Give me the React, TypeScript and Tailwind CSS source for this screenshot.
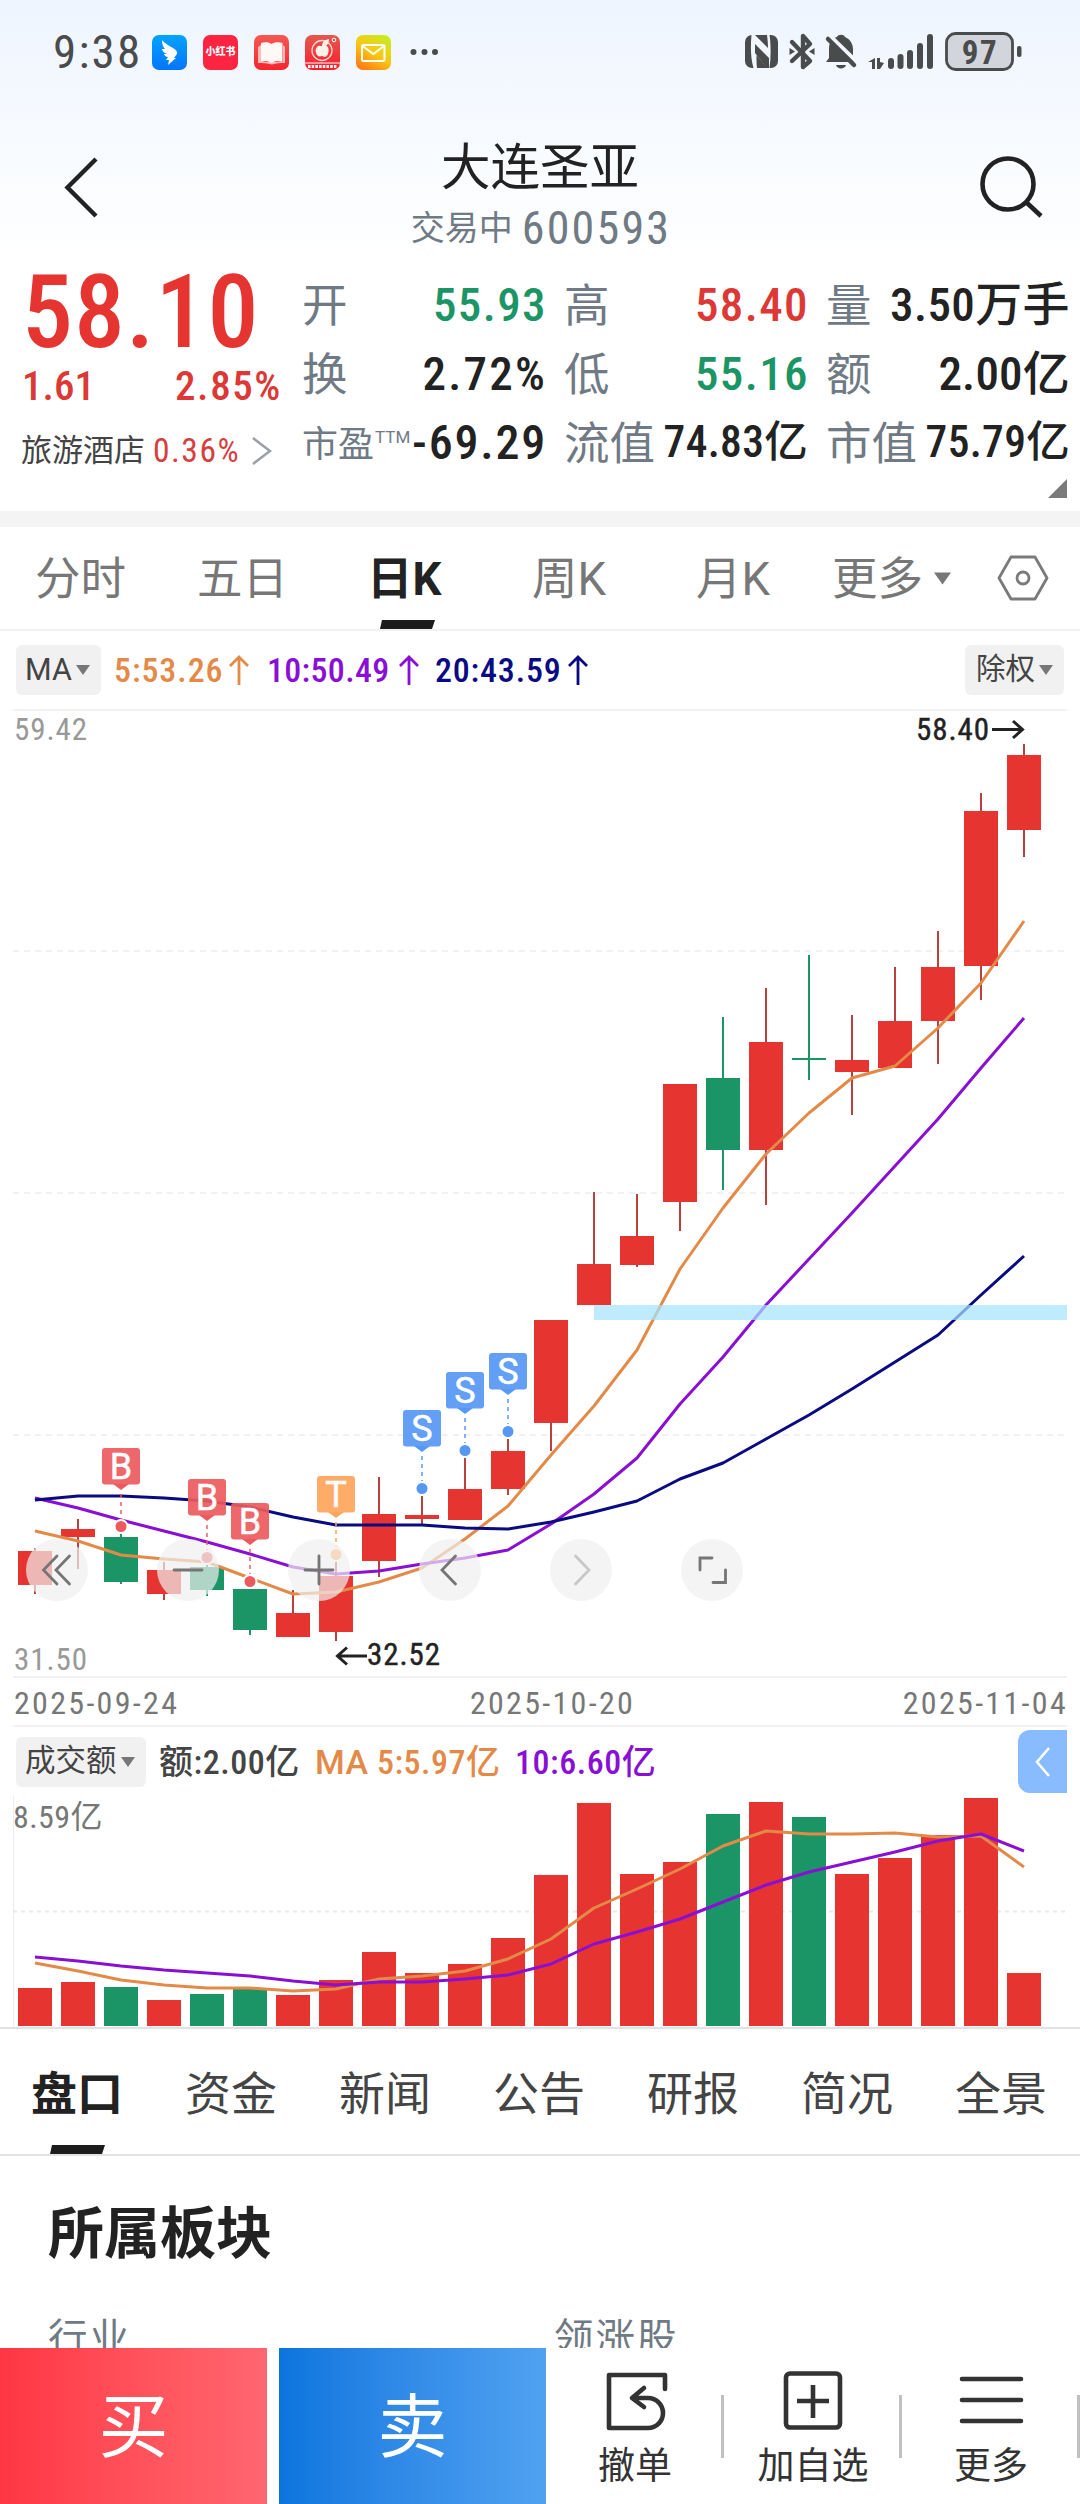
import React from "react";

type Candle = {
  top: number;
  bottom: number;
  high: number;
  low: number;
  up: boolean;
};

type Marker = { index: number; y: number; label: string; color: string };

const RED = "#e63431";
const GREEN = "#1b9565";
const ORANGE = "#e48a48";
const PURPLE = "#8a0fd4";
const NAVY = "#0a0a82";

// Chart columns are 43px apart, the first one is centred on x = 35
const colX = (i: number) => 35 + i * 43;

const c = (top: number, bottom: number, high: number, low: number, up = true): Candle => ({
  top,
  bottom,
  high,
  low,
  up,
});

const candles: Candle[] = [
  c(1551, 1585, 1548, 1594),
  c(1529, 1537, 1519, 1569),
  c(1537, 1582, 1533, 1584, false),
  c(1570, 1594, 1562, 1600),
  c(1567, 1590, 1564, 1596, false),
  c(1589, 1630, 1589, 1635, false),
  c(1613, 1637, 1590, 1637),
  c(1576, 1632, 1561, 1641),
  c(1514, 1561, 1477, 1577),
  c(1515, 1519, 1496, 1526),
  c(1489, 1520, 1458, 1520),
  c(1451, 1489, 1439, 1495),
  c(1320, 1423, 1320, 1451),
  c(1264, 1305, 1192, 1305),
  c(1236, 1265, 1194, 1267),
  c(1084, 1202, 1084, 1231),
  c(1078, 1150, 1017, 1190, false),
  c(1042, 1150, 988, 1205),
  c(1058, 1060, 955, 1080, false),
  c(1060, 1072, 1015, 1115),
  c(1021, 1068, 967, 1068),
  c(967, 1021, 931, 1064),
  c(811, 966, 793, 1000),
  c(755, 830, 744, 857),
];

const ma5 = [1531, 1541, 1555, 1559, 1562, 1578, 1594, 1592, 1582, 1568, 1539, 1506, 1455, 1406, 1350, 1269, 1208, 1154, 1113, 1078, 1066, 1028, 983, 921];
const ma10 = [1498, 1508, 1520, 1531, 1542, 1554, 1567, 1574, 1571, 1564, 1558, 1550, 1524, 1494, 1458, 1404, 1357, 1305, 1259, 1213, 1166, 1119, 1068, 1018];
const ma20 = [1500, 1496, 1496, 1498, 1501, 1507, 1517, 1525, 1525, 1525, 1528, 1529, 1522, 1512, 1501, 1479, 1463, 1439, 1415, 1389, 1362, 1335, 1295, 1256];

const volumeTops = [1988, 1982, 1987, 2000, 1994, 1989, 1995, 1980, 1952, 1973, 1964, 1938, 1875, 1803, 1874, 1862, 1814, 1802, 1817, 1874, 1858, 1835, 1798, 1973];
const volMa5 = [1963, 1971, 1980, 1985, 1988, 1988, 1991, 1989, 1979, 1976, 1971, 1959, 1939, 1908, 1889, 1869, 1846, 1831, 1834, 1834, 1833, 1837, 1836, 1867];
const volMa10 = [1957, 1961, 1966, 1970, 1973, 1976, 1981, 1985, 1982, 1982, 1979, 1975, 1964, 1944, 1932, 1919, 1902, 1885, 1872, 1862, 1852, 1841, 1834, 1851];

const markers: Marker[] = [
  { index: 2, y: 1448, label: "B", color: "#ed5a5d" },
  { index: 4, y: 1479, label: "B", color: "#ed5a5d" },
  { index: 5, y: 1503, label: "B", color: "#ed5a5d" },
  { index: 7, y: 1476, label: "T", color: "#ffa55c" },
  { index: 9, y: 1410, label: "S", color: "#5698f4" },
  { index: 10, y: 1372, label: "S", color: "#5698f4" },
  { index: 11, y: 1353, label: "S", color: "#5698f4" },
];

const toPoints = (ys: number[]) => ys.map((y, i) => `${colX(i)},${y}`).join(" ");

const Line: React.FC<{ ys: number[]; color: string }> = ({ ys, color }) => (
  <polyline points={toPoints(ys)} fill="none" stroke={color} strokeWidth="3" strokeLinejoin="round" />
);

const Caret: React.FC<{ className?: string }> = ({ className = "" }) => (
  <svg className={`shrink-0 ${className}`} viewBox="0 0 14 10" fill="#777">
    <path d="M0 0h14L7 10z" />
  </svg>
);

const UpArrow: React.FC = () => (
  <svg className="ml-auto h-[30px] w-5" viewBox="0 0 20 30" fill="none" stroke="currentColor" strokeWidth="2.8">
    <path d="M10 30V2M1 11l9-9 9 9" />
  </svg>
);

const StatusBar: React.FC = () => (
  <div className="flex h-[106px] items-center pl-[53px] text-[#4a4b4d]">
    <span className="-mt-[4px] w-[99px] text-[47px] leading-none tracking-[2.2px]">9:38</span>
    <div className="flex -translate-y-px gap-4">
      <svg className="size-[35px]" viewBox="0 0 35 35">
        <defs>
          <linearGradient id="wing" x1="0" y1="0" x2="0" y2="1">
            <stop offset="0" stopColor="#02a3ff" />
            <stop offset="1" stopColor="#0575fb" />
          </linearGradient>
        </defs>
        <rect width="35" height="35" rx="7" fill="url(#wing)" />
        <path d="M10 5c2 3 6 5 11 8 3 2 5 4 4 6l-3 4h2l-8 7 1-5h-3l2-3c-2 0-4-2-4-3l3 0c-3-1-5-3-5-5h3c-2-2-3-5-3-9z" fill="#fff" />
      </svg>
      <div className="flex size-[35px] items-center justify-center whitespace-nowrap rounded-[7px] bg-[#fd2442] text-[10px] font-black leading-none text-white">
        小红书
      </div>
      <svg className="size-[35px]" viewBox="0 0 35 35">
        <defs>
          <linearGradient id="book" x1="0" y1="0" x2="0" y2="1">
            <stop offset="0" stopColor="#f65852" />
            <stop offset="1" stopColor="#f6262d" />
          </linearGradient>
        </defs>
        <rect width="35" height="35" rx="7" fill="url(#book)" />
        <path d="M4 12l3-2v17h22V10l2 2v16c-5 0-9 0-13 1.500-5-1.500-9-1.500-14-1.500z" fill="#fbb" />
        <path d="M7 8c4-1 8-1 10.500 1 3-2 7-2 11-1v19c-4-1-8-1-11 1-3-2-7-2-10.500-1z" fill="#fff8f4" />
      </svg>
      <svg className="size-[35px]" viewBox="0 0 35 35">
        <defs>
          <linearGradient id="apple" x1="0" y1="0" x2="0" y2="1">
            <stop offset="0" stopColor="#e25a50" />
            <stop offset="1" stopColor="#fb1c2c" />
          </linearGradient>
        </defs>
        <rect width="35" height="35" rx="7" fill="url(#apple)" />
        <circle cx="17" cy="15.500" r="10" fill="none" stroke="#fbd6d0" strokeWidth="1.300" />
        <path d="M12 12c2-2 3-1 5-1 0-3 2-6 7-7 0 3-1 5-3 7 3 0 3 5 2 8-2 4-4 3-6 2-3 1-5 0-6-3-1-3 0-5 1-6z" fill="#fdf1ea" />
        <circle cx="29" cy="5" r="1.800" fill="none" stroke="#fff" strokeWidth="1" />
        <path d="M0 28h35" stroke="#fff" strokeWidth="1" />
        <path d="M3 31.500h29" stroke="#fff" strokeWidth="3" strokeDasharray="2.500 1.200" />
      </svg>
      <svg className="size-[35px]" viewBox="0 0 35 35" fill="none">
        <defs>
          <linearGradient id="mail" x1="0.200" y1="1" x2="0.800" y2="0">
            <stop offset="0" stopColor="#fd7a16" />
            <stop offset="0.500" stopColor="#f9c813" />
            <stop offset="1" stopColor="#c6ec20" />
          </linearGradient>
        </defs>
        <rect width="35" height="35" rx="7" fill="url(#mail)" />
        <rect x="6" y="10" width="22.500" height="16" rx="1.500" stroke="#fff" strokeWidth="2" />
        <path d="M6.500 11l10.800 8L28 11" stroke="#fff" strokeWidth="2" />
      </svg>
    </div>
    <svg className="ml-[19px] h-[8px] w-[30px] -translate-y-px" viewBox="0 0 30 8" fill="#4a4b4d">
      <circle cx="3.500" cy="4" r="3" />
      <circle cx="14.500" cy="4" r="3" />
      <circle cx="25" cy="4" r="3" />
    </svg>
    <svg className="ml-auto h-[40px] w-[335px] -translate-y-px" viewBox="745 32 335 40" fill="#4a4b4d">
      {/* NFC */}
      <rect x="745" y="35" width="33" height="33" rx="7" />
      <path
        d="M751.500 35h3.500l13 13c0-5-.5-9-1-13h2.500c1.500 10 1.500 22 0 33h-2l-11-13c0 5 0 9 .5 13h-3.500c-3-10-3-22-2-33z"
        fill="#f2f6fd"
      />
      <path d="M755 44l14 14v10h-2L755 53z" />
      {/* Bluetooth */}
      <path
        d="M792 61l18-17-7-8v31l7-6-18-19"
        fill="none"
        stroke="#4a4b4d"
        strokeWidth="4.400"
        strokeLinejoin="round"
        strokeLinecap="round"
      />
      <path d="M789.500 48l5.500 3.500-5.500 3.500zM814.500 48l-5.500 3.500 5.500 3.500z" />
      {/* Muted bell */}
      <path d="M829 58V49c0-8 4-11 8-12 1-3 7-3 8 0 5 2 8 7 8 12v7l3 6h-30z" />
      <path d="M826 32l32 31" stroke="#f2f6fd" strokeWidth="4" />
      <path d="M828 39l26 26" stroke="#4a4b4d" strokeWidth="4.500" strokeLinecap="round" />
      <path d="M836 65h10c-1 4.500-9 4.500-10 0z" />
      {/* Signal */}
      <path d="M875 58v11h-3v-7h-4zM877 58h3v4l4 1-4 6h-3z" />
      <rect x="888" y="58" width="6" height="11" rx="3" />
      <rect x="897.500" y="54" width="6" height="15" rx="3" />
      <rect x="907" y="50" width="6" height="19" rx="3" />
      <rect x="917" y="43" width="6" height="26" rx="3" />
      <rect x="927" y="34" width="6" height="35" rx="3" />
      {/* Battery */}
      <rect x="946.500" y="33.500" width="66" height="36" rx="9" fill="#d2d5db" stroke="#4a4b4d" strokeWidth="2.800" />
      <rect x="1017" y="46" width="4.500" height="11" rx="2" />
      <text x="980" y="63.500" fontSize="33" fontWeight="700" textAnchor="middle" letterSpacing="1.500">
        97
      </text>
    </svg>
  </div>
);

const Header: React.FC = () => (
  <header className="flex h-[150px] items-start justify-between pl-[60px] pr-[34px]">
    <svg className="mt-[50px] h-[62px] w-[40px]" viewBox="0 0 40 62" fill="none" stroke="#222" strokeWidth="4.400">
      <path d="M36 3L7.500 31.500 36 60" />
    </svg>
    <div className="flex flex-col items-center pt-[32px]">
      <h1 className="text-[49.500px] leading-[60px] text-[#222]">大连圣亚</h1>
      <p className="flex items-center leading-[60px] text-[#6f7a84]">
        <span className="mr-[9px] text-[34px]">交易中</span>
        <span className="-mr-[2px] text-[46px] tracking-[2.2px]">600593</span>
      </p>
    </div>
    <svg className="mt-[47px] h-[66px] w-[66px]" viewBox="0 0 66 66" fill="none" stroke="#222" strokeWidth="4.600">
      <circle cx="28" cy="31" r="25.500" />
      <path d="M46 49l15 14" />
    </svg>
  </header>
);

type StatProps = {
  label: React.ReactNode;
  value: string;
  color?: string;
  size?: string;
};

const Stat: React.FC<StatProps> = ({
  label,
  value,
  color = "text-[#222]",
  size = "text-[47px] tracking-[1.4px] -mr-px",
}) => (
  <div className="flex items-center justify-between">
    <span className="whitespace-nowrap pt-1 text-[45.500px] leading-none text-[#6f7a84]">{label}</span>
    <span className={`whitespace-nowrap font-medium leading-none ${size} ${color}`}>{value}</span>
  </div>
);

const Quote: React.FC = () => (
  <section className="relative flex h-[255px] pl-[22px] pr-[8px]">
    <div className="w-[280px]">
      <div className="pt-[7px] text-[102px] font-medium leading-[98px] tracking-[1px] text-[#e63431]">58.10</div>
      <div className="flex w-[260px] justify-between text-[41px] font-medium leading-[51px] text-[#dc3836]">
        <span>1.61</span>
        <span className="tracking-[1.6px]">2.85%</span>
      </div>
      <div className="mt-[16px] flex items-center whitespace-nowrap leading-[46px]">
        <span className="-ml-px text-[31px] text-[#444]">旅游酒店</span>
        <span className="ml-[8px] text-[33.500px] tracking-[1.5px] text-[#d5403e]">0.36%</span>
        <svg className="ml-[12px] h-[28px] w-[20px]" viewBox="0 0 20 28" fill="none" stroke="#98a1a9" strokeWidth="2.600">
          <path d="M1 1l17 13L1 27" />
        </svg>
      </div>
    </div>
    <div className="grid h-[221px] flex-1 grid-cols-[244px_244px_244px] grid-rows-3 gap-x-[18px] pt-[14px]">
      <Stat label="开" value="55.93" color="text-[#1b9565]" />
      <Stat label="高" value="58.40" color="text-[#dc3836]" />
      <Stat label="量" value="3.50万手" size="text-[47px] tracking-[0.4px]" />
      <Stat label="换" value="2.72%" size="text-[47px] tracking-[2.2px] -mr-px" />
      <Stat label="低" value="55.16" color="text-[#1b9565]" />
      <Stat label="额" value="2.00亿" size="text-[47px] tracking-[0.2px]" />
      <Stat
        label={
          <span className="flex items-start text-[36px] leading-none">
            市盈<span className="ml-px text-[17px] leading-5 [font-stretch:100%]">TTM</span>
          </span>
        }
        value="-69.29"
        size="text-[48px] tracking-[1.8px] -mr-px"
      />
      <Stat label="流值" value="74.83亿" size="text-[43.500px] tracking-[0.3px]" />
      <Stat label="市值" value="75.79亿" size="text-[43.500px] tracking-[0.3px]" />
    </div>
    <svg className="absolute bottom-[13px] right-[13px] size-[19px]" viewBox="0 0 19 19" fill="#7a7a7a">
      <path d="M19 0v19H0z" />
    </svg>
  </section>
);

const Underline: React.FC<{ className: string }> = ({ className }) => (
  <svg className={`absolute bottom-0 h-[9px] w-[55px] ${className}`} viewBox="0 0 55 9" fill="#1c1c1c">
    <path d="M2 0h53l-3 9H0z" />
  </svg>
);

const PeriodTabs: React.FC = () => (
  <nav className="flex h-[104px] items-center border-b-2 border-[#f1f1f1] text-[45.500px] leading-none text-[#777] [font-stretch:100%]">
    <span className="w-[162px] pl-[35px] pt-1">分时</span>
    <span className="w-[163px] pl-[35px] pt-1">五日</span>
    <span className="relative flex h-full w-[165px] items-center pl-[42px] pt-1 font-bold text-[#222]">
      日K
      <Underline className="left-[55px]" />
    </span>
    <span className="w-[165px] pl-[42px] pt-1">周K</span>
    <span className="w-[165px] pl-[41px] pt-1">月K</span>
    <span className="flex items-center pl-[12px] pt-1">
      更多
      <Caret className="mb-1 ml-[11px] h-[13px] w-[17px]" />
    </span>
    <svg className="ml-[46px] h-[46px] w-[52px]" viewBox="0 0 52 46" fill="none" stroke="#7a7a7a" strokeWidth="2.800">
      <path d="M14 2h24l12 21-12 21H14L2 23z" strokeLinejoin="round" />
      <circle cx="26" cy="23" r="6" />
    </svg>
  </nav>
);

const MaLegend: React.FC = () => (
  <div className="mx-[13px] flex h-[80px] items-center border-b-2 border-[#f1f1f1] pl-[3px] pr-[3px] text-[34px] font-medium leading-none">
    <button className="flex h-[50px] w-[85px] items-center rounded-md bg-[#f1f1f1] pl-[9px] text-[30.500px] font-normal text-[#444]">
      <span className="[font-stretch:100%]">MA</span>
      <Caret className="ml-1 h-[10px] w-[14px]" />
    </button>
    <span className="flex w-[148px] items-center pl-[13px] tracking-[0.9px] text-[#e48a48]">
      5:53.26
      <UpArrow />
    </span>
    <span className="flex w-[170px] items-center pl-[18px] tracking-[0.3px] text-[#8a0fd4]">
      10:50.49
      <UpArrow />
    </span>
    <span className="flex w-[169px] items-center pl-[16px] tracking-[0.8px] text-[#0a0a82]">
      20:43.59
      <UpArrow />
    </span>
    <button className="ml-auto flex h-[50px] w-[99px] items-center rounded-md bg-[#f1f1f1] pl-[11px] text-[29.500px] font-normal text-[#444]">
      除权
      <Caret className="ml-1 h-[10px] w-[14px]" />
    </button>
  </div>
);

const MarkerFlag: React.FC<{ marker: Marker }> = ({ marker }) => {
  const x = colX(marker.index);
  const { y, label, color } = marker;
  return (
    <g>
      <path d={`M${x} ${y + 46}V${y + 72}`} stroke={color} strokeWidth="1.800" strokeDasharray="4 4" opacity="0.800" />
      <circle cx={x} cy={y + 78.5} r="6.500" fill={color} stroke="#fff" strokeWidth="2" />
      <rect x={x - 19} y={y} width="38" height="36.500" rx="3" fill={color} opacity="0.920" />
      <path d={`M${x - 8} ${y + 36}h16l-8 6z`} fill={color} />
      <text
        className="[font-stretch:100%]"
        x={x}
        y={y + 31}
        fontSize="36"
        fontWeight="400"
        fill="#fff"
        stroke="#fff"
        strokeWidth="0.500"
        textAnchor="middle"
      >
        {label}
      </text>
    </g>
  );
};

const Control: React.FC<{ d: string; faded?: boolean }> = ({ d, faded = false }) => (
  <button className="size-[62px] rounded-full bg-[#f0f0f0]/70">
    <svg
      className="size-[62px]"
      viewBox="0 0 62 62"
      fill="none"
      stroke={faded ? "#c8c8c8" : "#757575"}
      strokeWidth="2.800"
      strokeLinecap="round"
    >
      <path d={d} />
    </svg>
  </button>
);

const CandleChart: React.FC = () => (
  <div className="relative h-[965px]">
    <svg className="block h-[965px] w-[1080px]" viewBox="0 711 1080 965">
      {[951, 1193, 1435].map((y) => (
        <path key={y} d={`M13 ${y}H1067`} stroke="#ededed" strokeWidth="1.500" strokeDasharray="6 5" />
      ))}
      {candles.map((k, i) => (
        <g key={i} fill={k.up ? RED : GREEN}>
          <rect x={colX(i) - 1} y={k.high} width="2" height={k.low - k.high} fill={k.up ? "#b9403e" : GREEN} />
          <rect x={colX(i) - 17} y={k.top} width="34" height={k.bottom - k.top} />
        </g>
      ))}
      <Line ys={ma5} color={ORANGE} />
      <Line ys={ma10} color={PURPLE} />
      <Line ys={ma20} color={NAVY} />
      <rect x="594" y="1305" width="473" height="15" fill="#a5e3fd" opacity="0.720" />
      {markers.map((m) => (
        <MarkerFlag key={m.index} marker={m} />
      ))}
      <g fontSize="31" letterSpacing="0.900">
        <text x="14" y="740" fill="#999">
          59.42
        </text>
        <text x="14" y="1670" fill="#999">
          31.50
        </text>
        <text x="916" y="739.500" fill="#222" stroke="#222" strokeWidth="0.400">
          58.40
        </text>
        <text x="367" y="1665" fill="#222" stroke="#222" strokeWidth="0.400">
          32.52
        </text>
      </g>
      <g fill="none" stroke="#222" strokeWidth="3">
        <path d="M992 729.500h30M1013 721l9.500 8.500-9.500 8.500" />
        <path d="M367 1656h-29M347 1647.500l-9.500 8.500 9.500 8.500" />
      </g>
    </svg>
    <div className="absolute left-[26px] top-[828px] flex gap-[69px]">
      <Control d="M31 17L17.500 31 31 45M43.500 17L30 31l13.500 14" />
      <Control d="M17 31h28" />
      <Control d="M17 31h28M31 17v28" />
      <Control d="M36.500 17L23 31l13.500 14" />
      <Control d="M25.500 17L39 31 25.500 45" faded />
      <Control d="M19 31V19h12M32 43.500h12.500V31" />
    </div>
  </div>
);

const Dates: React.FC = () => (
  <div className="mx-[13px] flex h-[51px] items-center justify-between border-y-2 border-[#f1f1f1] pl-px pt-0.5 text-[32px] leading-none tracking-[2.3px] text-[#777]">
    <span>2025-09-24</span>
    <span className="pl-[23px]">2025-10-20</span>
    <span className="-mr-px">2025-11-04</span>
  </div>
);

const VolumeChart: React.FC = () => (
  <>
    <div className="mx-[13px] flex h-[69px] items-center text-[34px] font-medium leading-none tracking-[0.5px]">
      <button className="ml-[3px] flex h-[50px] w-[130px] items-center rounded-md bg-[#f1f1f1] pl-[9px] text-[30.500px] font-normal tracking-normal text-[#444]">
        成交额
        <Caret className="ml-1 h-[10px] w-[14px]" />
      </button>
      <span className="w-[168px] pl-[13px] text-[#444]">额:2.00亿</span>
      <span className="w-[201px] whitespace-nowrap pl-px text-[#e48a48]">
        <span className="[font-stretch:100%]">MA</span> 5:5.97亿
      </span>
      <span className="text-[#8a0fd4]">10:6.60亿</span>
      <button className="ml-auto flex h-[63px] w-[49px] items-center justify-center rounded-l-xl bg-[#88bbff]">
        <svg className="h-[30px] w-[16px]" viewBox="0 0 16 30" fill="none" stroke="#fff" strokeWidth="2.600">
          <path d="M14 1L2 15l12 14" />
        </svg>
      </button>
    </div>
    <svg className="block h-[234px] w-[1080px]" viewBox="0 1796 1080 234">
      <path d="M13.500 1796V2027" stroke="#ececec" strokeWidth="1" />
      <path d="M13 1911.500H1067" stroke="#e9e9e9" strokeWidth="2" strokeDasharray="4 4" />
      <text x="13" y="1828" fontSize="32" fill="#777" letterSpacing="0.400">
        8.59亿
      </text>
      {volumeTops.map((y, i) => (
        <rect key={i} x={colX(i) - 17} y={y} width="34" height={2026 - y} fill={candles[i].up ? RED : GREEN} />
      ))}
      <Line ys={volMa5} color={ORANGE} />
      <Line ys={volMa10} color={PURPLE} />
      <rect x="0" y="2027" width="1080" height="2" fill="#e2e2e2" />
    </svg>
  </>
);

const InfoTabs: React.FC = () => (
  <nav className="flex h-[126px] border-b-2 border-[#e3e3e3] text-[46px] leading-[128px] text-[#444]">
    <span className="relative w-[154px] pl-[31px] font-bold text-[#222]">
      盘口
      <Underline className="left-[50px]" />
    </span>
    {["资金", "新闻", "公告", "研报", "简况", "全景"].map((tab) => (
      <span key={tab} className="w-[154px] text-center">
        {tab}
      </span>
    ))}
  </nav>
);

const Sector: React.FC = () => (
  <section className="h-[192px] overflow-hidden px-[48px] pt-[48px]">
    <h2 className="text-[56px] font-bold leading-[60px] text-[#222]">所属板块</h2>
    <div className="mt-[45px] grid grid-cols-[506px_1fr] text-[39.500px] leading-[60px] tracking-[2px] text-[#6f7a84]">
      <span>行业</span>
      <span>领涨股</span>
    </div>
  </section>
);

const Action: React.FC<{ label: string; children: React.ReactNode }> = ({ label, children }) => (
  <button className="flex w-[178px] shrink-0 flex-col items-center pt-[20px]">
    <svg className="h-[66px] w-[66px]" viewBox="0 0 66 66" fill="none" stroke="#333" strokeWidth="4.600">
      {children}
    </svg>
    <span className="mt-[11px] whitespace-nowrap text-[37px] leading-[44px] text-[#333]">{label}</span>
  </button>
);

const TradeBar: React.FC = () => (
  <footer className="flex h-[156px] bg-white">
    <button className="w-[267px] shrink-0 bg-linear-to-r from-[#ff3543] to-[#ff6670] pt-1 text-[70px] leading-none text-white">
      买
    </button>
    <button className="ml-3 w-[267px] shrink-0 bg-linear-to-r from-[#0975de] to-[#50a2f1] pt-1 text-[70px] leading-none text-white">
      卖
    </button>
    <div className="flex flex-1">
      <Action label="撤单">
        <path d="M63 21V7H7v53h39a15 15 0 0 0 0-30H32M42 20L30 30l12 9" strokeLinejoin="round" strokeLinecap="round" />
      </Action>
      <i className="-ml-[3px] mt-[47px] h-[63px] w-[3px] shrink-0 bg-[#c0c0c0]" />
      <Action label="加自选">
        <rect x="6" y="5.500" width="54" height="54" rx="4" />
        <path d="M33 17v33M17 33h32" />
      </Action>
      <i className="-ml-[3px] mt-[47px] h-[63px] w-[3px] shrink-0 bg-[#c0c0c0]" />
      <Action label="更多">
        <path d="M4 11h59M4 32h59M4 53h59" strokeLinecap="round" />
      </Action>
      <i className="-ml-[3px] mt-[47px] h-[63px] w-[3px] shrink-0 bg-[#c0c0c0]" />
    </div>
  </footer>
);

export default function App() {
  return (
    <div className="h-[2504px] w-[1080px] overflow-hidden bg-white bg-[linear-gradient(#eef5ff,#ffffff_260px)] font-['Roboto','Noto_Sans_CJK_SC',sans-serif] [font-stretch:75%]">
      <StatusBar />
      <Header />
      <Quote />
      <div className="h-[16px] bg-[#f4f4f4]" />
      <PeriodTabs />
      <MaLegend />
      <CandleChart />
      <Dates />
      <VolumeChart />
      <InfoTabs />
      <Sector />
      <TradeBar />
    </div>
  );
}
